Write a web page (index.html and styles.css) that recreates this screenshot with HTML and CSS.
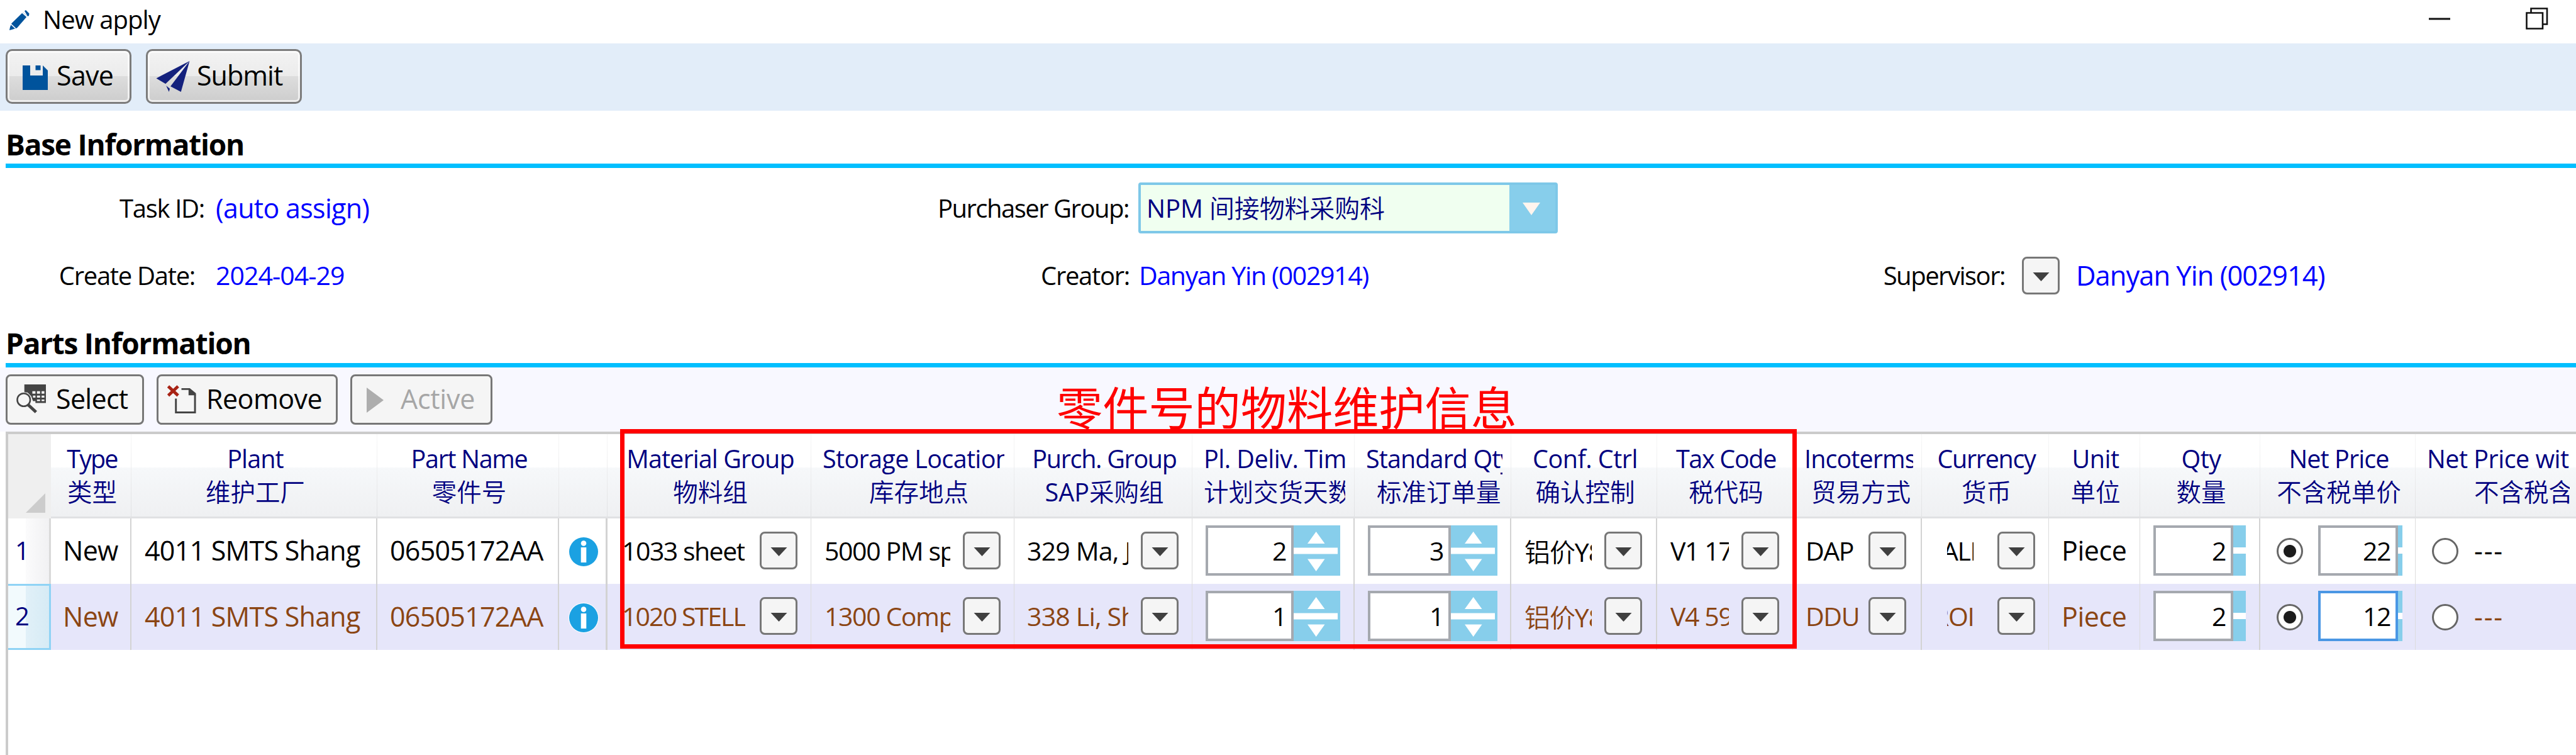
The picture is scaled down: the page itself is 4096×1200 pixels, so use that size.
FILE: index.html
```
<!DOCTYPE html>
<html lang="zh-CN">
<head>
<meta charset="utf-8">
<title>New apply</title>
<link rel="stylesheet" href="styles.css">
</head>
<body>
<svg class="defs" width="0" height="0">
  <symbol id="arrow" viewBox="0 0 26 14"><path d="M0 0h26L13 14z"/></symbol>
  <symbol id="info" viewBox="0 0 48 48">
    <circle cx="24" cy="24" r="24" fill="#fff"/><circle cx="24" cy="24" r="23" fill="#1ba1e2"/>
    <circle cx="24" cy="10.5" r="4.3" fill="#fff"/><path d="M19.7 17h8.6v24h-8.6z" fill="#fff"/>
  </symbol>
  <symbol id="spin" viewBox="0 0 74 80">
    <path d="M0 0h74v80H0z" fill="#87ceeb"/><path d="M0 35.5h70v10H0z" fill="#fff"/>
    <path d="M22 29h27.500L35.700 10zM22 53.500h27.500L35.700 73z" fill="#fff"/>
  </symbol>
</svg>
<main class="window">
  <header class="titlebar">
    <svg class="pencil" viewBox="0 0 32 32"><path d="M21.500 3.500l7 6L12 28.500 4 31l-4 1 1-5 2.500-6z" fill="#00539c"/><path d="M24 1.500L26 0l5.500 5.500-.500 3.500-2 1z" fill="#00539c"/><path d="M20.500 4l8 7M2.500 22.500l7 6.500" stroke="#fff" stroke-width="1.700"/></svg>
    <span class="app-title">New apply</span>
    <svg class="min" viewBox="0 0 34 4"><path d="M0 2h34" stroke="#111" stroke-width="3"/></svg>
    <svg class="restore" viewBox="0 0 36 36"><path d="M8.500 8V1.500H34v25h-6" fill="none" stroke="#111" stroke-width="2.600"/><path d="M1.500 8.500h25.500v25H1.500z" fill="#fff" stroke="#111" stroke-width="2.600"/></svg>
  </header>

  <nav class="toolbar">
    <button class="glossy save"><svg viewBox="0 0 40 39"><path d="M0 0h12v16h20V0l8 8v31H0z" fill="#00539c"/><path d="M20.500 0h8v7.500h-8z" fill="#00539c"/></svg><span>Save</span></button>
    <button class="glossy submit"><svg viewBox="0 0 54 50"><path d="M54 0L0 28l15 9zM54 0L23 41l17 9zM16 40l6 5-1.500 5z" fill="#14217d"/></svg><span>Submit</span></button>
  </nav>

  <h2 class="section">Base Information</h2>
  <section class="form">
    <label>Task ID:</label><span class="value big auto">(auto assign)</span>
    <label class="tightest">Purchaser Group:</label>
    <div class="combo"><span><b class="latin">NPM</b> 间接物料采购科</span><i><svg viewBox="0 0 26 14" preserveAspectRatio="none"><path d="M0 0h26L13 14z" fill="#fff5ee"/></svg></i></div>
    <label></label><span></span>
    <label class="trail">Create Date:</label><span class="value date">2024-04-29</span>
    <label>Creator:</label><span class="value">Danyan Yin (002914)</span>
    <label class="tightest">Supervisor:</label>
    <div class="picker"><button class="drop"><svg><use href="#arrow"/></svg></button><span class="value big">Danyan Yin (002914)</span></div>
  </section>

  <h2 class="section parts">Parts Information</h2>
  <nav class="parts-bar">
    <button class="flat select"><svg viewBox="0 0 48 48"><path d="M13 0h35v30H31v-3h-4l-3-8-6-6h-5z" fill="#444"/><path d="M26 11h5v4h-5zM33.500 11h5v4h-5zM41 11h4.500v4H41zM27 18h4v3.500h-4zM33.500 18h5v3.500h-5zM41 18h4.500v3.500H41zM33.500 24.500h5V27h-5zM41 24.500h4.500V27H41z" fill="#f5f5f5"/><circle cx="12" cy="25" r="12.500" fill="#f5f5f5"/><circle cx="12" cy="25" r="10.500" fill="#f5f5f5" stroke="#444" stroke-width="2.600"/><path d="M19 33l13 12" stroke="#444" stroke-width="5"/></svg><span>Select</span></button>
    <button class="flat remove"><svg viewBox="0 0 48 48"><path d="M1.500 2l16 15M17.500 2l-16 15" stroke="#a82315" stroke-width="5"/><path d="M14 22v22.500h31V14L36 6.500H23" fill="none" stroke="#444" stroke-width="3"/><path d="M34.500 5L47 16.500H34.500z" fill="#444"/></svg><span>Reomove</span></button>
    <button class="flat active" disabled><svg viewBox="0 0 27 40"><path d="M0 0l27 20L0 40z" fill="#adadad"/></svg><span>Active</span></button>
  </nav>

  <section class="grid">
    <div class="row head">
      <div class="corner"><svg viewBox="0 0 31 31"><path d="M31 0v31H0z" fill="#ccc"/></svg></div>
      <div class="th"><span class="sp-d">Type</span><span>类型</span></div>
      <div class="th"><span class="sp-b">Plant</span><span>维护工厂</span></div>
      <div class="th"><span class="sp-c">Part Name</span><span>零件号</span></div>
      <div class="th"></div>
      <div class="th"><span class="sp-b">Material Group</span><span>物料组</span></div>
      <div class="th over storage"><span class="sp-b">Storage Location</span><span>库存地点</span></div>
      <div class="th"><span class="sp-c">Purch. Group</span><span><b class="latin">SAP</b>采购组</span></div>
      <div class="th over deliv"><span class="sp-a">Pl. Deliv. Time</span><span>计划交货天数</span></div>
      <div class="th over std"><span class="sp-b">Standard Qty</span><span>标准订单量</span></div>
      <div class="th"><span class="sp-a">Conf. Ctrl</span><span>确认控制</span></div>
      <div class="th"><span class="sp-c">Tax Code</span><span>税代码</span></div>
      <div class="th over inco"><span class="sp-b">Incoterms</span><span>贸易方式</span></div>
      <div class="th"><span class="sp-c">Currency</span><span>货币</span></div>
      <div class="th"><span class="sp-a">Unit</span><span>单位</span></div>
      <div class="th"><span class="sp-a">Qty</span><span>数量</span></div>
      <div class="th"><span class="sp-b">Net Price</span><span>不含税单价</span></div>
      <div class="th over last"><span class="sp-a">Net Price with</span><span>不含税含税</span></div>
    </div>

    <div class="row">
      <div class="num">1</div>
      <div class="td t1">New</div>
      <div class="td t2">4011 SMTS Shang</div>
      <div class="td t3">06505172AA</div>
      <div class="td heavy ic"><svg><use href="#info"/></svg></div>
      <div class="td sm thin mat"><span>1033 sheet</span><button class="drop"><svg><use href="#arrow"/></svg></button></div>
      <div class="td sm thin sto"><span>5000 PM sp</span><button class="drop"><svg><use href="#arrow"/></svg></button></div>
      <div class="td sm thin pur"><span>329 Ma, Ji</span><button class="drop"><svg><use href="#arrow"/></svg></button></div>
      <div class="td sm"><b class="box w140">2</b><svg class="spin"><use href="#spin"/></svg></div>
      <div class="td sm"><b class="box w132">3</b><svg class="spin"><use href="#spin"/></svg></div>
      <div class="td sm cnf"><span>铝价<b class="latin">Y8</b></span><button class="drop"><svg><use href="#arrow"/></svg></button></div>
      <div class="td sm thin tax"><span>V1 17%</span><button class="drop"><svg><use href="#arrow"/></svg></button></div>
      <div class="td sm inc"><span>DAP</span><button class="drop"><svg><use href="#arrow"/></svg></button></div>
      <div class="td sm thin cur"><span>ALI</span><button class="drop"><svg><use href="#arrow"/></svg></button></div>
      <div class="td thin unit">Piece</div>
      <div class="td sm"><b class="box w127">2</b><i class="stub"></i></div>
      <div class="td sm thin price"><i class="radio on"></i><b class="box w127">22</b><i class="stub slim"></i></div>
      <div class="td none price"><i class="radio"></i><span class="dash">---</span></div>
    </div>

    <div class="row sel">
      <div class="num">2</div>
      <div class="td t1">New</div>
      <div class="td t2">4011 SMTS Shang</div>
      <div class="td t3">06505172AA</div>
      <div class="td heavy ic"><svg><use href="#info"/></svg></div>
      <div class="td sm thin mat"><span class="caps">1020 STELL</span><button class="drop"><svg><use href="#arrow"/></svg></button></div>
      <div class="td sm thin sto"><span>1300 Comp</span><button class="drop"><svg><use href="#arrow"/></svg></button></div>
      <div class="td sm thin pur"><span>338 Li, Sh</span><button class="drop"><svg><use href="#arrow"/></svg></button></div>
      <div class="td sm"><b class="box w140">1</b><svg class="spin"><use href="#spin"/></svg></div>
      <div class="td sm"><b class="box w132">1</b><svg class="spin"><use href="#spin"/></svg></div>
      <div class="td sm cnf"><span>铝价<b class="latin">Y8</b></span><button class="drop"><svg><use href="#arrow"/></svg></button></div>
      <div class="td sm thin tax"><span>V4 59%</span><button class="drop"><svg><use href="#arrow"/></svg></button></div>
      <div class="td sm inc"><span>DDU</span><button class="drop"><svg><use href="#arrow"/></svg></button></div>
      <div class="td sm thin cur"><span>ROI</span><button class="drop"><svg><use href="#arrow"/></svg></button></div>
      <div class="td thin unit">Piece</div>
      <div class="td sm"><b class="box w127">2</b><i class="stub"></i></div>
      <div class="td sm thin price"><i class="radio on"></i><b class="box w127 focus">12</b><i class="stub slim"></i></div>
      <div class="td none price"><i class="radio"></i><span class="dash">---</span></div>
    </div>
  </section>

  <div class="note">零件号的物料维护信息</div>
  <div class="frame"></div>
</main>
</body>
</html>
```
FILE: styles.css
```
* { box-sizing: border-box; }
body {
  margin: 0;
  background: #fff;
  color: #000;
  font-family: "Open Sans", "Noto Sans CJK SC", sans-serif;
  font-size: 40px;
}
button { font: inherit; color: inherit; padding: 0; margin: 0; }
.latin { font-weight: 400; }
.defs { position: absolute; }
.window {
  position: relative;
  width: 4096px;
  height: 1200px;
  overflow: hidden;
  display: flex;
  flex-direction: column;
}
svg { display: block; flex: none; }

/* title bar */
.titlebar { height: 69px; flex: none; display: flex; align-items: flex-start; padding-left: 15px; }
.pencil { width: 32px; height: 32px; margin-top: 16px; }
.app-title { margin-left: 21px; line-height: 62px; letter-spacing: -.95px; }
.min { width: 34px; height: 4px; margin: 28px 0 0 auto; }
.restore { width: 36px; height: 36px; margin: 12px 44px 0 120px; }

/* main toolbar */
.toolbar {
  height: 107px;
  flex: none;
  background: #e2edf9;
  display: flex;
  align-items: flex-start;
  gap: 23px;
  padding: 9px 0 0 9px;
}
.toolbar button, .parts-bar button { display: flex; align-items: center; text-align: left; }
.glossy {
  height: 87px;
  border: 3px solid #7c7c7c;
  border-radius: 10px;
  background: linear-gradient(#f3f3f3, #ebebeb 50%, #dddddd 50%, #cdcdcd);
  box-shadow: inset 0 0 0 3px rgba(255, 255, 255, .65);
  font-size: 43px;
}
.glossy span { line-height: 77px; height: 81px; }
.save { width: 200px; }
.save svg { width: 40px; height: 39px; margin: 4px 0 0 24px; }
.save span { margin-left: 14px; letter-spacing: -.7px; }
.submit { width: 248px; }
.submit svg { width: 54px; height: 49px; margin: 0 0 0 13px; }
.submit span { margin-left: 11px; letter-spacing: -1px; }

/* section titles */
.section {
  margin: 0 0 0 9px;
  height: 91px;
  flex: none;
  padding-top: 22px;
  border-bottom: 7px solid #00bfff;
  font-size: 46px;
  font-weight: 700;
  line-height: 62px;
  letter-spacing: -1.25px;
}
.section.parts { height: 93px; line-height: 64px; }

/* form */
.form {
  height: 224px;
  flex: none;
  padding-top: 10px;
  display: grid;
  grid-template-columns: 325px 1075px 396px 1104px 289px 1fr;
  grid-template-rows: 107px 107px;
  line-height: 107px;
  white-space: nowrap;
}
.form label { text-align: right; letter-spacing: -1.3px; padding-right: 0; }
.form label.tightest { letter-spacing: -1.5px; padding-right: 1px; }
.form label.trail { padding-right: 15px; }
.value { color: #00f; padding-left: 15px; font-size: 41px; letter-spacing: -1.35px; }
.value.date { padding-left: 18px; letter-spacing: -.95px; }
.value.big { font-size: 43.5px; letter-spacing: -1px; }
.value.auto { padding-left: 18px; font-size: 43px; letter-spacing: -.7px; }
.combo {
  width: 667px;
  height: 81px;
  margin: 13px 0 0 14px;
  display: flex;
  border: 4px solid #7ec8e8;
  border-radius: 4px;
  background: #87ceeb;
  color: #000080;
  line-height: 73px;
}
.combo span { width: 586px; padding-left: 9px; background: #f0fff0; letter-spacing: -.15px; font-weight: 350; }
.combo i { flex: 1; padding: 28px 0 0 21px; }
.combo i svg { width: 28px; height: 20px; }
.picker { display: flex; align-items: center; }
.picker .drop { margin-left: 26px; }
.picker .value { padding-left: 26px; }

.drop {
  flex: none;
  width: 60px;
  height: 60px;
  border: 3px solid #777;
  border-radius: 8px;
  background: #f5f5f5;
  display: flex;
  justify-content: center;
  padding-top: 22px;
}
.drop svg { width: 27px; height: 14px; fill: #404040; }

/* parts toolbar */
.parts-bar {
  height: 102px;
  flex: none;
  background: #f8f8ff;
  display: flex;
  align-items: flex-start;
  gap: 20px;
  padding: 11px 0 0 9px;
}
.flat {
  height: 80px;
  border: 3px solid #777;
  border-radius: 8px;
  background: #f5f5f5;
  font-size: 43px;
}
.flat span { line-height: 72px; height: 74px; }
.select { width: 220px; letter-spacing: -.7px; }
.select svg { width: 47px; height: 47px; margin: 0 0 2px 14px; }
.select span { margin-left: 16px; }
.remove { width: 288px; letter-spacing: -.55px; }
.remove svg { width: 47px; height: 47px; margin: 0 0 0 14px; }
.remove span { margin-left: 15px; }
.active { width: 226px; color: #a6a6a6; letter-spacing: -.25px; }
.active svg { width: 27px; height: 40px; margin: 2px 0 0 23px; }
.active span { margin-left: 27px; }

/* data grid */
.grid {
  flex: 1;
  margin-left: 9px;
  border-left: 4px solid #cbcbcb;
  border-top: 4px solid #cbcbcb;
}
.row {
  display: grid;
  grid-template-columns: 68px 128px 391px 289px 77px 324px 323px 283px 258px 249px 232px 216px 205px 202px 145px 191px 247px 255px;
  height: 104px;
  white-space: nowrap;
}
.row.sel { height: 105px; background: #e6e6fa; color: #8b4513; }
.row.head { height: 134px; color: #000080; }
.corner { background: #efefef; padding: 94px 0 0 28px; }
.corner svg { width: 31px; height: 31px; }
.th {
  border-right: 4px solid #e3e4e6;
  border-image: linear-gradient(#f7f7f7, #e0e1e3) 1;
  border-bottom: 3px solid #d6d6d6;
  background: linear-gradient(#fff 40%, #f6f8fa 41%, #eff0f2);
  padding: 13px 10px 0 14px;
  margin-right: -3px;
  position: relative;
  text-align: center;
  font-size: 39.5px;
  line-height: 53.5px;
  overflow: hidden;
}
.th span { display: block; overflow: hidden; }
.th span + span { font-weight: 350; margin-top: -1px; }
.th.over { text-align: left; }
.storage { padding-left: 18px; padding-right: 15px; }
.storage .sp-b { letter-spacing: -.65px; }
.storage span + span { padding-left: 74px; }
.deliv { padding-left: 18px; padding-right: 14px; }
.std { padding-left: 18px; padding-right: 13px; }
.std span + span { padding-left: 17px; }
.inco { padding-left: 18px; padding-right: 13px; }
.inco span + span { padding-left: 11px; }
.th.last { padding-left: 18px; padding-right: 10px; margin-right: 0; border-right: 0; }
.last span + span { padding-left: 75px; }
.sp-a { letter-spacing: -.5px; }
.sp-b { letter-spacing: -.9px; }
.sp-c { letter-spacing: -1.3px; }
.sp-d { letter-spacing: -1.9px; }

.num {
  padding-left: 11px;
  color: #000080;
  border-right: 3px solid #d9d9d9;
  background: linear-gradient(90deg, #fff 28px, #fbfbfc 28px, #f1f1f3);
  line-height: 102px;
}
.sel .num {
  border: 3px solid #8fd3f5;
  border-left: 0;
  background: linear-gradient(90deg, #f2fafd 28px, #e1f0f8 28px, #d6ebf5);
  line-height: 96px;
}
.td {
  display: flex;
  align-items: center;
  padding: 0 21px 3px 21px;
  border-right: 2px solid #d3d3d3;
  overflow: hidden;
  font-size: 43px;
  letter-spacing: -.75px;
}
.td.sm { font-size: 41px; letter-spacing: -1.4px; }
.td.thin { border-right: 1px solid #dcdcdc; }
.td.heavy { border-right-width: 3px; }
.td.none { border-right: 0; }
.td > span { overflow: hidden; flex: none; }
.td .drop { margin-left: auto; }
.td.t1 { padding-left: 19px; }
.td.t2 { padding-left: 21px; }
.td.t3 { padding-left: 20px; }
.td.ic { padding: 2px 0 0 15px; }
.ic svg { width: 48px; height: 48px; }
.td.mat { padding-left: 23px; }
.mat span { letter-spacing: -1.5px; }
.mat .caps { letter-spacing: -1.9px; }
.sto span { width: 200px; }
.td.pur { padding-left: 20px; }
.pur span { width: 161px; letter-spacing: -.8px; }
.td.cnf { padding-right: 22px; }
.cnf span { width: 107px; letter-spacing: -1.1px; font-weight: 350; }
.tax span { width: 93px; }
.td.inc { padding-left: 20px; padding-right: 23px; }
.td.cur { padding-left: 40px; }
.cur span { width: 42px; text-indent: -8px; }
.sel .cur span { text-indent: -22px; }
.td.unit { padding-left: 20px; letter-spacing: -.45px; }
.td.price { padding-left: 26px; }

.box {
  flex: none;
  height: 80px;
  border: 4px solid #a5a9af;
  background: #fff;
  color: #000;
  font-weight: 400;
  text-align: right;
  line-height: 72px;
  padding-right: 8px;
}
.box.focus { border-color: #4a97e4; }
.w140 { width: 140px; }
.w132 { width: 132px; }
.w127 { width: 127px; }
.spin { width: 74px; height: 80px; }
.stub {
  flex: none;
  width: 20px;
  height: 80px;
  background: linear-gradient(#87ceeb 35px, #fff 35px, #fff 45px, #87ceeb 45px);
}
.stub.slim { width: 7px; }
.radio {
  flex: none;
  width: 42px;
  height: 42px;
  margin-top: 3px;
  border: 3px solid #666;
  border-radius: 50%;
  background: #fff;
}
.radio.on { background: radial-gradient(circle, #1c1c1c 9.5px, #fff 10.5px); margin-right: 24px; }
.dash { margin-left: 25px; letter-spacing: 1.8px; }

/* annotation laid over the grid */
.note {
  position: absolute;
  left: 1680px;
  top: 598px;
  color: #f00;
  font-size: 73.2px;
  line-height: 100px;
  white-space: nowrap;
}
.frame {
  position: absolute;
  left: 986px;
  top: 682px;
  width: 1871px;
  height: 349px;
  border: 7px solid #f00;
}
```
